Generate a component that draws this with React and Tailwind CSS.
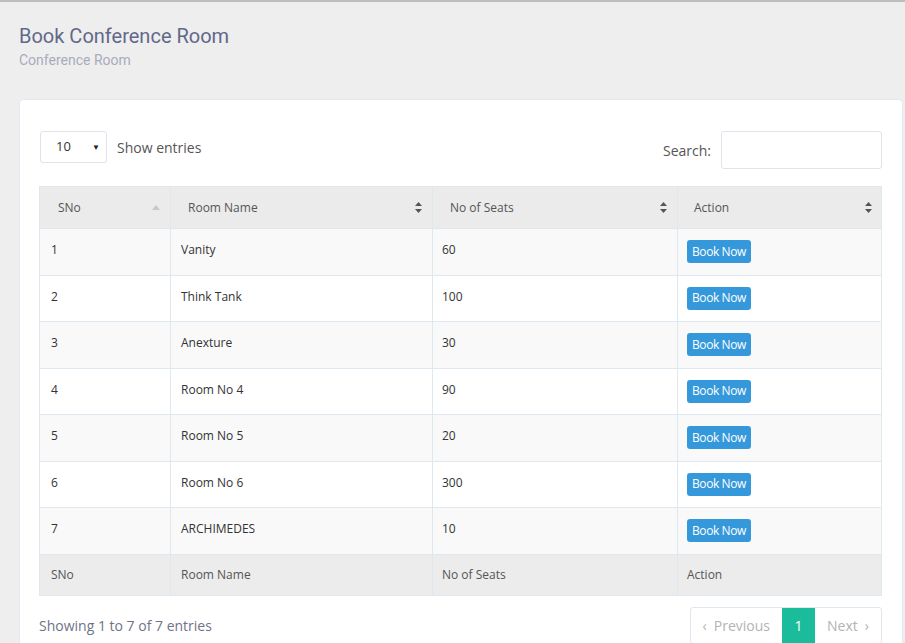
import React from 'react';

const rooms = [
  { id: 1, name: 'Vanity', seats: 60 },
  { id: 2, name: 'Think Tank', seats: 100 },
  { id: 3, name: 'Anexture', seats: 30 },
  { id: 4, name: 'Room No 4', seats: 90 },
  { id: 5, name: 'Room No 5', seats: 20 },
  { id: 6, name: 'Room No 6', seats: 300 },
  { id: 7, name: 'ARCHIMEDES', seats: 10 },
];

const SortBoth = () => (
  <svg width="7" height="11" viewBox="0 0 7 11" className="shrink-0">
    <path d="M3.5 0 L7 4 L0 4 Z" fill="#555" />
    <path d="M3.5 11 L7 7 L0 7 Z" fill="#555" />
  </svg>
);

const SortUp = () => (
  <svg width="8" height="5" viewBox="0 0 8 5" className="shrink-0">
    <path d="M4 0 L8 5 L0 5 Z" fill="#c8c8c8" />
  </svg>
);

const App = () => {
  return (
    <div
      className="min-h-[643px] bg-[#eeeeee] border-t-2 border-[#bdbdbd] pl-[19px] pr-[2px] pt-[20px]"
      style={{ fontFamily: '"Open Sans", sans-serif' }}
    >
      {/* Page header */}
      <div style={{ fontFamily: 'Roboto, "Liberation Sans", sans-serif' }}>
        <h1 className="text-[20px] leading-[28px] text-[#62688a]">Book Conference Room</h1>
        <p className="text-[14px] leading-[18px] text-[#a9abbd] mt-[1px]">Conference Room</p>
      </div>

      {/* Card */}
      <div className="mt-[30px] bg-white border border-[#e1e8ef] rounded-[4px] pl-[19px] pr-[20px] pt-[31px] pb-[20px]">
        <div className="flex items-start justify-between">
          <div className="flex items-center gap-[10px]">
            <div className="ml-[1px] w-[67px] h-[32px] border border-[#dde4ec] rounded-[3px] flex items-center justify-between pl-[15px] pr-[6px] text-[13px] text-[#333]">
              <span>10</span>
              <span className="text-[8px] text-[#222]">▼</span>
            </div>
            <span className="text-[14px] text-[#555]">Show entries</span>
          </div>
          <div className="flex items-center gap-[10px]">
            <span className="text-[14px] text-[#555]">Search:</span>
            <div className="w-[161px] h-[38px] border border-[#dde4ec] rounded-[3px]" />
          </div>
        </div>

        <table className="mt-[17px] w-full border-collapse text-[12px]">
          <colgroup>
            <col className="w-[131px]" />
            <col className="w-[262px]" />
            <col className="w-[245px]" />
            <col />
          </colgroup>
          <thead>
            <tr className="h-[42px] bg-[#ebebeb] text-[#555]">
              <th className="border border-[#dfe7ef] pl-[18px] pr-[10px] font-normal text-left">
                <div className="flex items-center justify-between">
                  <span>SNo</span>
                  <SortUp />
                </div>
              </th>
              <th className="border border-[#dfe7ef] pl-[17px] pr-[10px] font-normal text-left">
                <div className="flex items-center justify-between">
                  <span>Room Name</span>
                  <SortBoth />
                </div>
              </th>
              <th className="border border-[#dfe7ef] pl-[17px] pr-[10px] font-normal text-left">
                <div className="flex items-center justify-between">
                  <span>No of Seats</span>
                  <SortBoth />
                </div>
              </th>
              <th className="border border-[#dfe7ef] pl-[16px] pr-[9px] font-normal text-left">
                <div className="flex items-center justify-between">
                  <span>Action</span>
                  <SortBoth />
                </div>
              </th>
            </tr>
          </thead>
          <tbody>
            {rooms.map((r, i) => (
              <tr key={r.id} className={`h-[46.5px] text-[#333] ${i % 2 === 0 ? 'bg-[#f9f9f9]' : 'bg-white'}`}>
                <td className="border border-[#dfe7ef] pl-[11px] align-top pt-[12px]">{r.id}</td>
                <td className="border border-[#dfe7ef] pl-[10px] align-top pt-[12px]">{r.name}</td>
                <td className="border border-[#dfe7ef] pl-[9px] align-top pt-[12px]">{r.seats}</td>
                <td className="border border-[#dfe7ef] pl-[9px] align-top pt-[11px]">
                  <button className="h-[23px] px-[5px] rounded-[3px] bg-[#3498db] text-white text-[12px] tracking-[-0.4px] leading-none">
                    Book Now
                  </button>
                </td>
              </tr>
            ))}
          </tbody>
          <tfoot>
            <tr className="h-[41px] bg-[#ececec] text-[#555]">
              <td className="border border-[#dfe7ef] pl-[11px]">SNo</td>
              <td className="border border-[#dfe7ef] pl-[10px]">Room Name</td>
              <td className="border border-[#dfe7ef] pl-[9px]">No of Seats</td>
              <td className="border border-[#dfe7ef] pl-[9px]">Action</td>
            </tr>
          </tfoot>
        </table>

        <div className="mt-[11px] flex items-start justify-between">
          <span className="text-[14px] text-[#6f7388] mt-[8px]">Showing 1 to 7 of 7 entries</span>
          <div className="flex h-[37px] border border-[#e3e6ea] rounded-[3px] text-[14px]">
            <div className="flex items-center gap-[7px] px-[12px] text-[#b3b3b3]">
              <span>‹</span>
              <span>Previous</span>
            </div>
            <div className="flex items-center justify-center w-[33px] bg-[#1abc9c] text-white">1</div>
            <div className="flex items-center gap-[7px] px-[12px] text-[#b3b3b3]">
              <span>Next</span>
              <span>›</span>
            </div>
          </div>
        </div>
      </div>
    </div>
  );
};

export default App;
